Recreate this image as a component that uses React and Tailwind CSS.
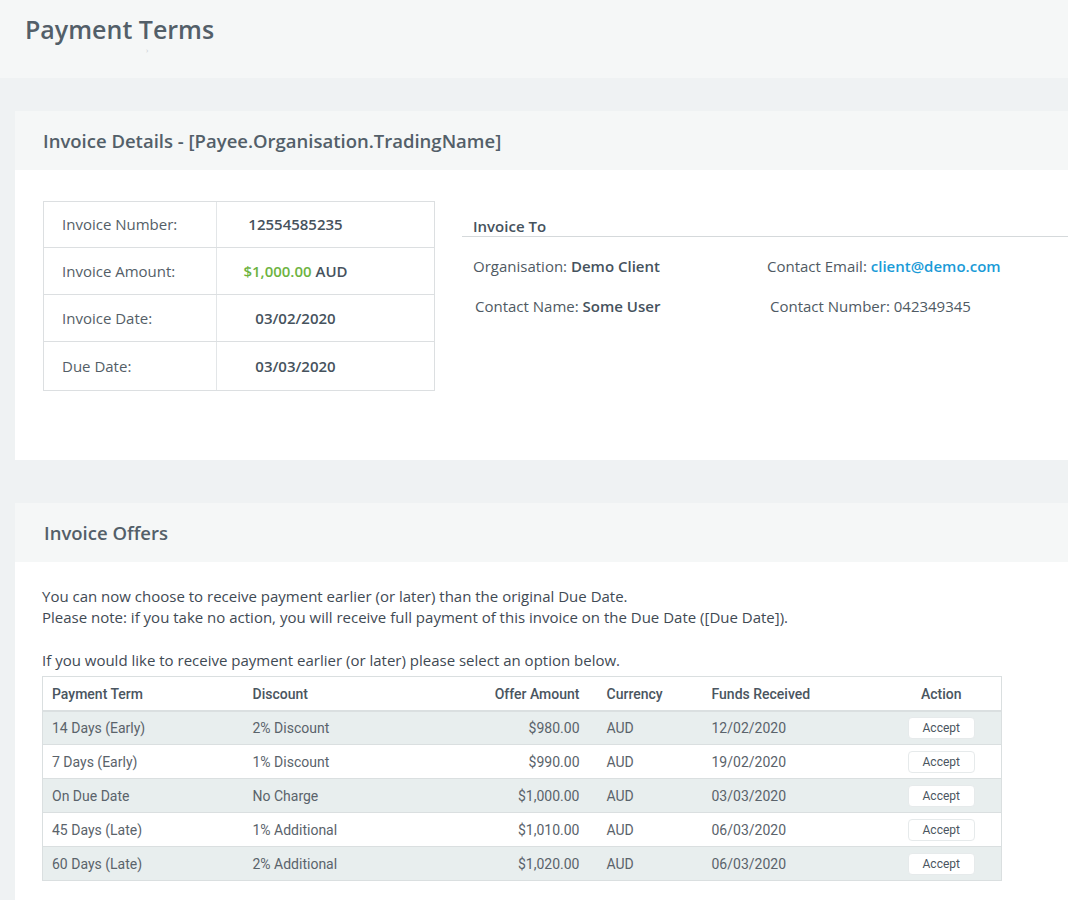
const sans = "font-['Open_Sans','Liberation_Sans',sans-serif]";
const roboto = "font-['Roboto','Liberation_Sans',sans-serif]";

const details = [
  { label: "Invoice Number:", h: "h-[45px]", value: <span className="font-semibold">12554585235</span> },
  {
    label: "Invoice Amount:",
    h: "h-[47px]",
    value: (
      <span className="font-semibold">
        <span className="text-[#6db33f]">$1,000.00</span> AUD
      </span>
    ),
  },
  { label: "Invoice Date:", h: "h-[47px]", value: <span className="font-semibold">03/02/2020</span> },
  { label: "Due Date:", h: "h-[49px]", value: <span className="font-semibold">03/03/2020</span> },
];

const offers = [
  ["14 Days (Early)", "2% Discount", "$980.00", "AUD", "12/02/2020"],
  ["7 Days (Early)", "1% Discount", "$990.00", "AUD", "19/02/2020"],
  ["On Due Date", "No Charge", "$1,000.00", "AUD", "03/03/2020"],
  ["45 Days (Late)", "1% Additional", "$1,010.00", "AUD", "06/03/2020"],
  ["60 Days (Late)", "2% Additional", "$1,020.00", "AUD", "06/03/2020"],
];

function CardHeader({ children }) {
  return (
    <div className="h-[59px] bg-[#f5f7f7] flex items-center pl-[28px] text-[18.5px] font-semibold text-[#535f69]">
      {children}
    </div>
  );
}

export default function App() {
  return (
    <div className={`${sans} bg-[#eff2f3] min-h-[900px] text-[#46525d]`}>
      {/* page title */}
      <div className="h-[78px] bg-[#f5f7f7] relative">
        <h1 className="pl-[25px] pt-[10px] text-[25px] leading-[38px] font-semibold text-[#535f69]">Payment Terms</h1>
        <span className="absolute left-[146px] top-[46px] text-[8px] leading-none text-[#c9cfd2]">›</span>
      </div>

      <div className="pl-[15px] pt-[33px]">
        {/* invoice details */}
        <div className="bg-white">
          <CardHeader>Invoice Details - [Payee.Organisation.TradingName]</CardHeader>
          <div className="flex pt-[31px] pb-[69px] pl-[28px]">
            <div className="w-[392px] border border-[#dcdfe1] text-[15px] shrink-0">
              {details.map((d, i) => (
                <div key={d.label} className={`flex ${d.h} ${i > 0 ? "border-t border-[#dcdfe1]" : ""}`}>
                  <div className="w-[173px] border-r border-[#e3e6e8] flex items-center pl-[18px] text-[#545e67]">
                    {d.label}
                  </div>
                  <div className="flex-1 flex items-center justify-center pr-[60px] text-[#46525d]">{d.value}</div>
                </div>
              ))}
            </div>
            <div className="flex-1 ml-[27px] text-[15px]">
              <div className="border-b border-[#d5d9db] pl-[11px] pt-[15px] font-semibold text-[#46525d] leading-[20px]">
                Invoice To
              </div>
              <div className="grid grid-cols-[294px_1fr] pl-[11px] mt-[19px] gap-y-[19px] leading-[21px] text-[#4f5a63]">
                <div>
                  Organisation: <span className="font-semibold text-[#46525d]">Demo Client</span>
                </div>
                <div>
                  Contact Email: <span className="font-semibold text-[#1a9bd7]">client@demo.com</span>
                </div>
                <div className="pl-[2px]">
                  Contact Name: <span className="font-semibold text-[#46525d]">Some User</span>
                </div>
                <div className="pl-[3px]">Contact Number: 042349345</div>
              </div>
            </div>
          </div>
        </div>

        {/* invoice offers */}
        <div className="bg-white mt-[43px]">
          <CardHeader>
            <span className="pl-[1px]">Invoice Offers</span>
          </CardHeader>
          <div className="pl-[27px] pt-[24px] pb-[20px] text-[15px] leading-[21px] text-[#3f4a54]">
            <p>You can now choose to receive payment earlier (or later) than the original Due Date.</p>
            <p>
              Please note: if you take no action, you will receive full payment of this invoice on the Due Date ([Due
              Date]).
            </p>
            <p className="mt-[22px]">If you would like to receive payment earlier (or later) please select an option below.</p>
            <table className={`${roboto} mt-[5px] w-[959px] table-fixed border border-[#dadfe0] text-[14px] border-collapse`}>
              <colgroup>
                <col className="w-[210px]" />
                <col className="w-[160px]" />
                <col className="w-[167px]" />
                <col className="w-[132px]" />
                <col className="w-[170px]" />
                <col className="w-[120px]" />
              </colgroup>
              <thead>
                <tr className="h-[34px] border-b-2 border-[#dadfe0] text-[#4a5560]">
                  <th className="text-left font-medium pl-[9px] pt-[2px]">Payment Term</th>
                  <th className="text-left font-medium pt-[2px]">Discount</th>
                  <th className="text-right font-medium pt-[2px]">Offer Amount</th>
                  <th className="text-left font-medium pl-[27px] pt-[2px]">Currency</th>
                  <th className="text-left font-medium pt-[2px]">Funds Received</th>
                  <th className="text-center font-medium pt-[2px]">Action</th>
                </tr>
              </thead>
              <tbody className="text-[#5a636b]">
                {offers.map((r, i) => (
                  <tr key={r[0]} className={`h-[34px] border-t border-[#dadfe0] ${i % 2 === 0 ? "bg-[#e8eeee]" : "bg-white"}`}>
                    <td className="pl-[9px] pt-[2px]">{r[0]}</td>
                    <td className="pt-[2px]">{r[1]}</td>
                    <td className="text-right pt-[2px]">{r[2]}</td>
                    <td className="pl-[27px] pt-[2px]">{r[3]}</td>
                    <td className="pt-[2px]">{r[4]}</td>
                    <td className="text-center">
                      <button
                        type="button"
                        className="w-[67px] h-[22px] rounded-[4px] bg-white border border-[#e6eaeb] text-[12px] text-[#4a5560] leading-none"
                      >
                        Accept
                      </button>
                    </td>
                  </tr>
                ))}
              </tbody>
            </table>
          </div>
        </div>
      </div>
    </div>
  );
}
